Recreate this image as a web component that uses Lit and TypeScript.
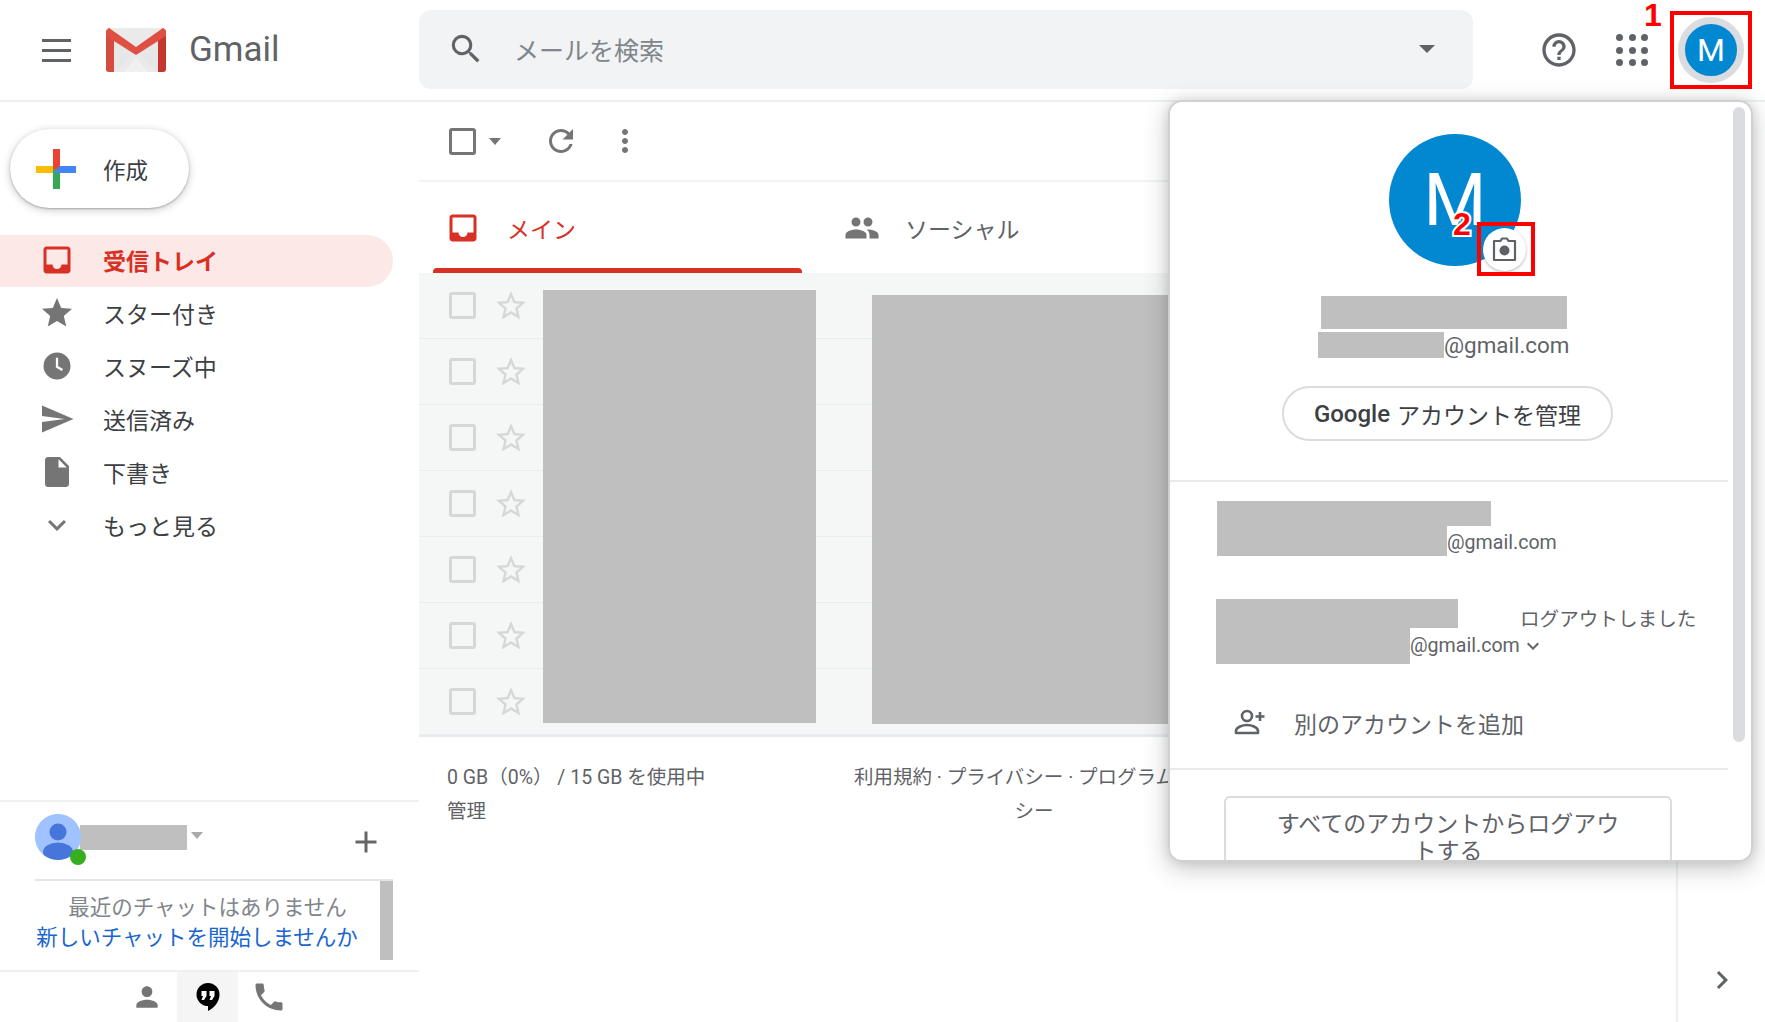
import { LitElement, html, css } from "lit";
import { customElement } from "lit/decorators.js";

const P = {
  search: "M15.5 14h-.79l-.28-.27A6.47 6.47 0 0 0 16 9.5 6.5 6.5 0 1 0 9.5 16c1.61 0 3.09-.59 4.23-1.57l.27.28v.79l5 4.99L20.49 19l-4.99-5zm-6 0C7.01 14 5 11.99 5 9.5S7.01 5 9.5 5 14 7.01 14 9.5 11.99 14 9.5 14z",
  help: "M11 18h2v-2h-2v2zm1-16C6.48 2 2 6.48 2 12s4.48 10 10 10 10-4.48 10-10S17.52 2 12 2zm0 18c-4.41 0-8-3.59-8-8s3.59-8 8-8 8 3.59 8 8-3.59 8-8 8zm0-14c-2.21 0-4 1.79-4 4h2c0-1.1.9-2 2-2s2 .9 2 2c0 2-3 1.75-3 5h2c0-2.25 3-2.5 3-5 0-2.21-1.79-4-4-4z",
  inbox: "M19 3H5c-1.1 0-2 .9-2 2v14c0 1.1.9 2 2 2h14c1.1 0 2-.9 2-2V5c0-1.1-.9-2-2-2zm0 12h-4c0 1.66-1.35 3-3 3s-3-1.34-3-3H5V5h14v10z",
  star: "M12 17.27L18.18 21l-1.64-7.03L22 9.24l-7.19-.61L12 2 9.19 8.63 2 9.24l5.46 4.73L5.82 21z",
  starO: "M22 9.24l-7.19-.62L12 2 9.19 8.63 2 9.24l5.46 4.73L5.82 21 12 17.27 18.18 21l-1.63-7.03L22 9.24zM12 15.4l-3.76 2.27 1-4.28-3.32-2.88 4.38-.38L12 6.1l1.71 4.04 4.38.38-3.32 2.88 1 4.28L12 15.4z",
  send: "M2.01 21L23 12 2.01 3 2 10l15 2-15 2z",
  draft: "M6 2c-1.1 0-1.99.9-1.99 2L4 20c0 1.1.89 2 1.99 2H18c1.1 0 2-.9 2-2V8l-6-6H6zm7 7V3.5L18.5 9H13z",
  down: "M7.41 8.59L12 13.17l4.59-4.58L18 10l-6 6-6-6 1.41-1.41z",
  right: "M8.59 16.59L13.17 12 8.59 7.41 10 6l6 6-6 6-1.41-1.41z",
  refresh: "M17.65 6.35C16.2 4.9 14.21 4 12 4c-4.42 0-7.99 3.58-7.99 8s3.57 8 7.99 8c3.73 0 6.84-2.55 7.73-6h-2.08c-.82 2.33-3.04 4-5.65 4-3.31 0-6-2.69-6-6s2.69-6 6-6c1.66 0 3.14.69 4.22 1.78L13 11h7V4l-2.35 2.35z",
  more: "M12 8c1.1 0 2-.9 2-2s-.9-2-2-2-2 .9-2 2 .9 2 2 2zm0 2c-1.1 0-2 .9-2 2s.9 2 2 2 2-.9 2-2-.9-2-2-2zm0 6c-1.1 0-2 .9-2 2s.9 2 2 2 2-.9 2-2-.9-2-2-2z",
  people: "M16 11c1.66 0 2.99-1.34 2.99-3S17.66 5 16 5c-1.66 0-3 1.34-3 3s1.34 3 3 3zm-8 0c1.66 0 2.99-1.34 2.99-3S9.66 5 8 5C6.34 5 5 6.34 5 8s1.34 3 3 3zm0 2c-2.33 0-7 1.17-7 3.5V19h14v-2.5c0-2.33-4.67-3.5-7-3.5zm8 0c-.29 0-.62.02-.97.05 1.16.84 1.97 1.97 1.97 3.45V19h6v-2.5c0-2.33-4.67-3.5-7-3.5z",
  person: "M12 12c2.21 0 4-1.79 4-4s-1.79-4-4-4-4 1.79-4 4 1.79 4 4 4zm0 2c-2.67 0-8 1.34-8 4v2h16v-2c0-2.66-5.33-4-8-4z",
  phone: "M6.62 10.79c1.44 2.83 3.76 5.14 6.59 6.59l2.2-2.2c.27-.27.67-.36 1.02-.24 1.12.37 2.33.57 3.57.57.55 0 1 .45 1 1V20c0 .55-.45 1-1 1-9.39 0-17-7.61-17-17 0-.55.45-1 1-1h3.5c.55 0 1 .45 1 1 0 1.25.2 2.45.57 3.57.11.35.03.74-.25 1.02l-2.2 2.2z",
  plus: "M19 13h-6v6h-2v-6H5v-2h6V5h2v6h6v2z",
};

const icon = (d: string, size: number, color: string) =>
  html`<svg class="ic" width=${size} height=${size} viewBox="0 0 24 24" style="fill:${color}"><path d=${d}></path></svg>`;

const GREY = "#757575";

@customElement("app-root")
export class AppRoot extends LitElement {
  static styles = css`
    :host {
      display: block;
      position: relative;
      width: 1765px;
      height: 1022px;
      overflow: hidden;
      background: #fff;
      font-family: Roboto, "Noto Sans CJK JP", sans-serif;
      color: #3c4043;
    }
    .ic { display: block; flex: none; }
    .header {
      height: 102px;
      box-sizing: border-box;
      border-bottom: 2px solid #eef1f2;
      display: flex;
      align-items: center;
    }
    .brand { width: 419px; display: flex; align-items: center; flex: none; }
    .burger { margin-left: 42px; width: 29px; height: 23px; display: flex; flex-direction: column; justify-content: space-between; }
    .burger i { display: block; height: 3px; background: #5f6368; }
    .logo { margin-left: 35px; display: block; }
    .wordmark { margin-left: 23px; font-size: 35px; color: #5f6368; line-height: 44px; }
    .search {
      width: 1054px; height: 79px; flex: none;
      background: #f1f3f4; border-radius: 12px;
      display: flex; align-items: center;
      box-sizing: border-box; padding-left: 28px; margin-top: -2px;
      position: relative;
    }
    .search .ph { margin-left: 29px; font-size: 25px; color: #80868b; flex: 1; }
    .search .tri { margin-right: 38px; }
    .tri { width: 0; height: 0; border-left: 8px solid transparent; border-right: 8px solid transparent; border-top: 8px solid #5f6368; flex: none; }
    .help { margin-left: 66px; }
    .apps { margin-left: 37px; width: 32px; height: 32px; display: grid; grid-template-columns: repeat(3, 7px); grid-template-rows: repeat(3, 7px); justify-content: space-between; align-content: space-between; }
    .apps i { background: #5f6368; border-radius: 50%; }
    .ring { margin-left: 30px; width: 66px; height: 66px; box-sizing: border-box; border: 7px solid #dadce0; border-radius: 50%; background: #0288d1; color: #fff; display: flex; align-items: center; justify-content: center; font-size: 32px; }

    .body { display: flex; height: 920px; }
    .side { width: 419px; flex: none; display: flex; flex-direction: column; }
    .compose {
      margin: 27px 0 0 10px; width: 179px; height: 79px; box-sizing: border-box;
      border-radius: 40px; background: #fff;
      box-shadow: 0 1px 2px rgba(60,64,67,.35), 0 2px 6px 2px rgba(60,64,67,.18);
      display: flex; align-items: center; padding-left: 26px; font-size: 22.5px;
    }
    .compose svg { display: block; margin-right: 27px; }
    .nav { margin-top: 27px; }
    .nav-row { height: 53px; display: flex; align-items: center; padding-left: 38.5px; font-size: 23px; color: #3c4043; width: 393px; box-sizing: border-box; }
    .nav-row .ic { margin-right: 28.5px; }
    .nav-row.active {
      height: 52px; margin-bottom: -1px; padding-bottom: 3px;
      background: #fce8e6; border-radius: 0 26px 26px 0;
      color: #d93025; font-weight: 700;
    }
    .chat { margin-top: auto; height: 222px; border-top: 2px solid #eef1f2; box-sizing: border-box; display: flex; flex-direction: column; }
    .me { height: 77px; flex: none; display: flex; padding-left: 35px; box-sizing: border-box; position: relative; }
    .me-av { width: 46px; height: 46px; margin-top: 12px; border-radius: 50%; background: #a0c3ff; position: relative; flex: none; }
    .me-av svg { display: block; border-radius: 50%; }
    .dot { position: absolute; left: 35px; top: 35px; width: 16px; height: 16px; border-radius: 50%; background: #36ae1e; }
    .me-name { width: 107px; height: 25px; background: #bfbfbf; margin: 23px 0 0 -1px; flex: none; }
    .me-tri { margin: 30px 0 0 4px; border-left: 6px solid transparent; border-right: 6px solid transparent; border-top: 7px solid #aaa; height: 0; width: 0; }
    .me-plus { margin: 22px 0 0 auto; transform: translateX(-35px); }
    .msg { margin-left: 35px; width: 358px; height: 91px; flex: none; border-top: 2px solid #e5e5e5; display: flex; box-sizing: border-box; }
    .msg-text { flex: 1; text-align: center; font-size: 21.5px; line-height: 30px; padding-top: 12px; color: #80868b; }
    .msg-text a { color: #1a66d0; display: block; margin-left: -21px; white-space: nowrap; text-decoration: none; }
    .msg-bar { width: 13px; height: 79px; background: #bfbfbf; flex: none; }
    .chat-tabs { height: 52px; border-top: 2px solid #eef1f2; box-sizing: border-box; display: flex; padding-left: 116px; }
    .chat-tab { width: 61px; display: flex; align-items: center; justify-content: center; }
    .chat-tab.on { background: #f5f5f5; }

    .main { width: 1257px; flex: none; border-right: 2px solid #eef0f1; box-sizing: content-box; margin-right: -2px; }
    .toolbar { height: 80px; box-sizing: border-box; border-bottom: 2px solid #f1f3f4; display: flex; align-items: center; padding-left: 30px; }
    .cb { box-sizing: border-box; width: 27px; height: 27px; border: 3px solid ${GREY_CSS()}; border-radius: 3px; flex: none; }
    .toolbar .tri { margin-left: 13px; border-left-width: 6.5px; border-right-width: 6.5px; border-top-width: 7px; }
    .toolbar .rf { margin-left: 42px; }
    .toolbar .mr { margin-left: 28px; }
    .tabs { height: 91px; display: flex; padding-left: 14px; }
    .tab { height: 91px; display: flex; align-items: center; font-size: 23px; position: relative; box-sizing: border-box; color: #5f6368; }
    .tab.on { width: 369px; padding-left: 11.5px; color: #d93025; }
    .tab.on::after { content: ""; position: absolute; left: 0; right: 0; bottom: 0; height: 5px; background: #d93025; border-radius: 4px 4px 0 0; }
    .tab.on .ic { margin-right: 26.5px; }
    .tab.so { padding-left: 41.5px; }
    .tab.so .ic { margin-right: 25.5px; }
    .list { position: relative; height: 464px; background: #f5f7f7; border-bottom: 2px solid #e6ebef; box-sizing: border-box; }
    .row { height: 66px; box-sizing: border-box; border-bottom: 1px solid #e8edf0; display: flex; align-items: center; padding-left: 30px; }
    .row .cb { border-color: #d6d8d8; }
    .row .ic { margin-left: 17px; }
    .row:last-of-type { border-bottom: 0; }
    .red { position: absolute; background: #bfbfbf; }
    .red.a { left: 124px; top: 17px; width: 273px; height: 433px; }
    .red.b { left: 453px; top: 22px; width: 320px; height: 429px; }
    .foot { display: flex; padding: 24px 0 0 28px; font-size: 19.5px; line-height: 34px; color: #5f6368; }
    .foot .l { width: 395px; flex: none; }
    .foot .c { width: 384px; flex: none; text-align: center; white-space: nowrap; }
    .rail { flex: 1; display: flex; align-items: flex-end; justify-content: center; padding-bottom: 24px; padding-left: 2px; }

    .panel {
      position: absolute; left: 1168px; top: 100px; width: 585px; height: 762px;
      box-sizing: border-box; background: #fff; overflow: hidden;
      border: 2px solid #d0d0d0; border-radius: 14px;
      display: flex; flex-direction: column; align-items: flex-start;
    }
    .shadow { position: absolute; left: 1168px; top: 100px; width: 585px; height: 762px; border-radius: 14px; box-shadow: 0 6px 24px rgba(60,64,67,.3), 0 0 10px rgba(60,64,67,.12); }
    .sb { position: absolute; left: 563px; top: 5px; width: 12px; height: 635px; border-radius: 6px; background: #dadce0; }
    .big {
      position: relative; margin: 32px 0 0 219px; width: 132px; height: 132px; flex: none; border-radius: 50%;
      background: #0288d1; color: #fff; font-size: 72px; display: flex; align-items: center; justify-content: center;
    }
    .cam { position: absolute; left: 94px; top: 94px; width: 43px; height: 43px; border-radius: 50%; background: #fff; box-shadow: 0 1px 3px rgba(60,64,67,.4); display: flex; align-items: center; justify-content: center; }
    .g { background: #bfbfbf; flex: none; }
    .name { margin: 30px 0 0 151px; width: 246px; height: 33px; }
    .em { margin: 3px 0 0 148px; display: flex; align-items: center; font-size: 22.4px; color: #5f6368; height: 26px; }
    .manage {
      margin: 28px 0 0 112px; width: 331px; height: 55px; box-sizing: border-box; flex: none;
      border: 2px solid #dadce0; border-radius: 28px; display: flex; align-items: center; justify-content: center;
      font-size: 23px; color: #3c4043; white-space: nowrap;
    }
    .manage b { font-weight: 500; font-size: 24px; margin-right: 7px; }
    .hr { width: 558px; height: 2px; background: #e8eaed; flex: none; }
    .hr.one { margin-top: 39px; }
    .hr.two { margin-top: 19px; }
    .acc { flex: none; font-size: 19.6px; color: #5f6368; }
    .acc .ln { display: flex; align-items: flex-start; }
    .acc.one { margin: 19px 0 0 47px; }
    .acc.one .mail { line-height: 34px; }
    .acc.two { margin: 39px 0 0 46px; }
    .acc.two .out { margin: 6px 0 0 62px; line-height: 29px; height: 29px; white-space: nowrap; }
    .acc.two .mail { line-height: 36px; }
    .acc.two .ic { margin: 6px 0 0 1px; }
    .add { margin: 33px 0 0 63px; height: 52px; flex: none; display: flex; align-items: center; font-size: 23px; color: #5f6368; }
    .add .ic { margin-right: 25px; }
    .logout {
      margin: 26px 0 0 54px; width: 448px; flex: none; box-sizing: border-box; height: 110px;
      border: 2px solid #dadce0; border-radius: 6px; padding: 13px 46px;
      text-align: center; font-size: 23px; line-height: 27px; color: #5f6368;
    }

    .box { position: absolute; box-sizing: border-box; border: 4px solid #f00; }
    .box.a { left: 1670px; top: 11px; width: 82px; height: 78px; }
    .box.b { left: 1477px; top: 222px; width: 58px; height: 54px; }
    .num { position: absolute; font-family: "Liberation Sans", sans-serif; font-weight: 700; font-size: 32px; line-height: 32px; color: #f00; }
    .num.a { left: 1644px; top: -1px; }
    .num.b { left: 1453px; top: 208px; -webkit-text-stroke: 4px #fff; paint-order: stroke fill; }
  `;

  render() {
    const rows = [0, 1, 2, 3, 4, 5, 6];
    return html`
      <div class="header">
        <div class="brand">
          <div class="burger"><i></i><i></i><i></i></div>
          <svg class="logo" width="60" height="44" viewBox="0 0 60 44">
            <rect x="0" y="0" width="60" height="44" rx="3" fill="#eaeaea"></rect>
            <polygon points="8,44 30,24 52,44" fill="#f1f1f1"></polygon>
            <polygon points="8,6 30,26 52,6 52,44 42,44 30,30 18,44 8,44" fill="#e4e4e4" opacity=".55"></polygon>
            <path d="M3 0 L0 3 V41 a3 3 0 0 0 3 3 H8 V10 Z" fill="#d54c3f"></path>
            <path d="M57 0 L60 3 V41 a3 3 0 0 1 -3 3 H52 V10 Z" fill="#c5372c"></path>
            <path d="M3 0 L30 19 L57 0 L60 3 V8 L30 27 L0 8 V3 Z" fill="#df4f43"></path>
          </svg>
          <span class="wordmark">Gmail</span>
        </div>
        <div class="search">
          ${icon(P.search, 38, "#5f6368")}
          <span class="ph">メールを検索</span>
          <div class="tri"></div>
        </div>
        <div class="help">${icon(P.help, 40, "#5f6368")}</div>
        <div class="apps">${[0, 1, 2, 3, 4, 5, 6, 7, 8].map(() => html`<i></i>`)}</div>
        <div class="ring">M</div>
      </div>

      <div class="body">
        <div class="side">
          <div class="compose">
            <svg width="40" height="40" viewBox="0 0 40 40">
              <rect x="17" y="0" width="7" height="20" fill="#ea4335"></rect>
              <rect x="0" y="17" width="17" height="7" fill="#fbbc05"></rect>
              <rect x="17" y="20" width="7" height="20" fill="#34a853"></rect>
              <rect x="24" y="17" width="16" height="7" fill="#4285f4"></rect>
              <polygon points="17,24 24,17 24,24" fill="#4285f4"></polygon>
            </svg>
            作成
          </div>
          <div class="nav">
            <div class="nav-row active">${icon(P.inbox, 36, "#d93025")}受信トレイ</div>
            <div class="nav-row">${icon(P.star, 36, GREY)}スター付き</div>
            <div class="nav-row">
              <svg class="ic" width="36" height="36" viewBox="0 0 24 24">
                <circle cx="12" cy="12" r="9" fill="${GREY}"></circle>
                <path d="M12 6.5v6l3.6 2.2" fill="none" stroke="#fff" stroke-width="1.5"></path>
              </svg>スヌーズ中
            </div>
            <div class="nav-row">${icon(P.send, 36, GREY)}送信済み</div>
            <div class="nav-row">${icon(P.draft, 36, GREY)}下書き</div>
            <div class="nav-row">${icon(P.down, 36, GREY)}もっと見る</div>
          </div>
          <div class="chat">
            <div class="me">
              <div class="me-av">
                <svg width="46" height="46" viewBox="0 0 46 46">
                  <circle cx="23" cy="23" r="23" fill="#a0c3ff"></circle>
                  <circle cx="23" cy="18" r="8.5" fill="#4676dc"></circle>
                  <ellipse cx="23" cy="38" rx="15" ry="9.5" fill="#4676dc"></ellipse>
                </svg>
                <div class="dot"></div>
              </div>
              <div class="me-name"></div>
              <div class="me-tri"></div>
              <div class="me-plus">${icon(P.plus, 36, "#666")}</div>
            </div>
            <div class="msg">
              <div class="msg-text">最近のチャットはありません<a>新しいチャットを開始しませんか</a></div>
              <div class="msg-bar"></div>
            </div>
            <div class="chat-tabs">
              <div class="chat-tab">${icon(P.person, 32, "#757575")}</div>
              <div class="chat-tab on">
                <svg width="26" height="30" viewBox="0 0 26 30">
                  <path d="M13 1a11.5 11.5 0 0 0-11.5 11.5A11.5 11.5 0 0 0 13 24v5c6-3 11.5-9 11.5-16.5A11.5 11.5 0 0 0 13 1z" fill="#000"></path>
                  <path d="M6.5 9h5v5l-2.5 4H6.5l1.5-4H6.5zM14.5 9h5v5l-2.5 4h-2.5l1.5-4h-1.5z" fill="#fff"></path>
                </svg>
              </div>
              <div class="chat-tab">${icon(P.phone, 36, "#757575")}</div>
            </div>
          </div>
        </div>

        <div class="main">
          <div class="toolbar">
            <div class="cb"></div>
            <div class="tri" style="border-top-color:${GREY}"></div>
            <div class="rf">${icon(P.refresh, 36, GREY)}</div>
            <div class="mr">${icon(P.more, 36, GREY)}</div>
          </div>
          <div class="tabs">
            <div class="tab on">${icon(P.inbox, 36, "#d93025")}メイン</div>
            <div class="tab so">${icon(P.people, 36, GREY)}ソーシャル</div>
          </div>
          <div class="list">
            ${rows.map(() => html`<div class="row"><div class="cb"></div>${icon(P.starO, 36, "#d6d8d8")}</div>`)}
            <div class="red a"></div>
            <div class="red b"></div>
          </div>
          <div class="foot">
            <div class="l">0 GB（0%） / 15 GB を使用中<br />管理</div>
            <div class="c">利用規約 · プライバシー · プログラムポリ<br />シー</div>
          </div>
        </div>
        <div class="rail">${icon(P.right, 36, "#5f6368")}</div>
      </div>

      <div class="shadow"></div>
      <div class="panel">
        <div class="sb"></div>
        <div class="big">
          M
          <div class="cam">
            <svg width="27" height="27" viewBox="0 0 27 27">
              <path d="M9.5 5 L11 2.5 H16 L17.5 5 H24 V24 H3 V5 Z" fill="none" stroke="#5f6368" stroke-width="2.2" stroke-linejoin="round"></path>
              <circle cx="13.5" cy="14.5" r="5" fill="#5f6368"></circle>
            </svg>
          </div>
        </div>
        <div class="g name"></div>
        <div class="em"><div class="g" style="width:126px;height:26px"></div>@gmail.com</div>
        <div class="manage"><b>Google</b>アカウントを管理</div>
        <div class="hr one"></div>
        <div class="acc one">
          <div class="g" style="width:274px;height:25px"></div>
          <div class="ln"><div class="g" style="width:230px;height:30px"></div><span class="mail">@gmail.com</span></div>
        </div>
        <div class="acc two">
          <div class="ln" style="height:29px"><div class="g" style="width:242px;height:29px"></div><span class="out">ログアウトしました</span></div>
          <div class="ln"><div class="g" style="width:194px;height:36px"></div><span class="mail">@gmail.com</span>${icon(P.down, 24, "#5f6368")}</div>
        </div>
        <div class="add">
          <svg class="ic" width="36" height="36" viewBox="0 0 36 36">
            <circle cx="14" cy="11" r="5" fill="none" stroke="#5f6368" stroke-width="2.6"></circle>
            <path d="M3 28 v-2 c0-4 7-6 11-6 s11 2 11 6 v2 z" fill="none" stroke="#5f6368" stroke-width="2.6" stroke-linejoin="round"></path>
            <path d="M27 7 v9 M22.5 11.500 h9" stroke="#5f6368" stroke-width="2.6"></path>
          </svg>
          別のアカウントを追加
        </div>
        <div class="hr two"></div>
        <div class="logout">すべてのアカウントからログアウトする</div>
      </div>

      <div class="box a"></div>
      <div class="box b"></div>
      <div class="num a">1</div>
      <div class="num b">2</div>
    `;
  }
}

function GREY_CSS() {
  return css`#757575`;
}
